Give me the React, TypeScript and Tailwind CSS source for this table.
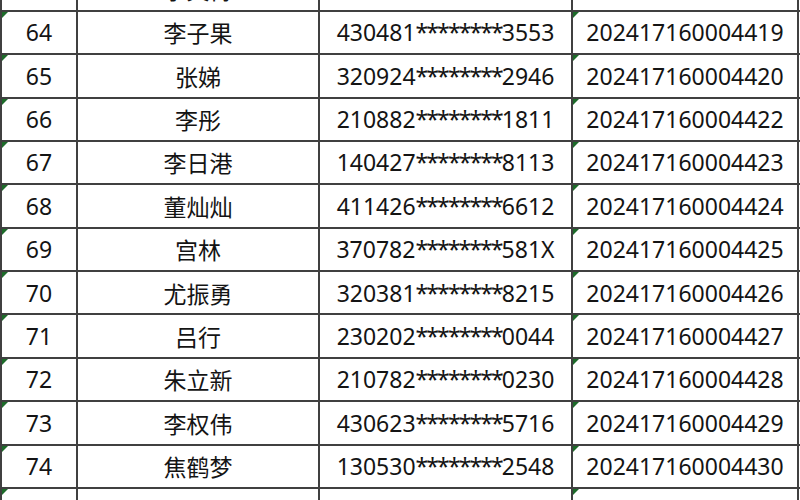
const rows = [
  { no: "63", name: "李文博", idCard: "410923********1237", examNo: "202417160004418" },
  { no: "64", name: "李子果", idCard: "430481********3553", examNo: "202417160004419" },
  { no: "65", name: "张娣", idCard: "320924********2946", examNo: "202417160004420" },
  { no: "66", name: "李彤", idCard: "210882********1811", examNo: "202417160004422" },
  { no: "67", name: "李日港", idCard: "140427********8113", examNo: "202417160004423" },
  { no: "68", name: "董灿灿", idCard: "411426********6612", examNo: "202417160004424" },
  { no: "69", name: "宫林", idCard: "370782********581X", examNo: "202417160004425" },
  { no: "70", name: "尤振勇", idCard: "320381********8215", examNo: "202417160004426" },
  { no: "71", name: "吕行", idCard: "230202********0044", examNo: "202417160004427" },
  { no: "72", name: "朱立新", idCard: "210782********0230", examNo: "202417160004428" },
  { no: "73", name: "李权伟", idCard: "430623********5716", examNo: "202417160004429" },
  { no: "74", name: "焦鹤梦", idCard: "130530********2548", examNo: "202417160004430" },
  { no: "75", name: "聂丽", idCard: "370983********0028", examNo: "202417160004431" },
];

// Excel's little "number stored as text" marker
function Marker() {
  return (
    <span className="absolute left-0 top-0 h-0 w-0 border-t-[6px] border-r-[6px] border-t-[#1d6b2a] border-r-transparent" />
  );
}

function Cell({
  children,
  className,
  marker,
}: {
  children: React.ReactNode;
  className: string;
  marker?: boolean;
}) {
  return (
    <div
      className={`relative flex items-center justify-center border-l-2 border-[#404040] ${className}`}
    >
      {marker && <Marker />}
      {children}
    </div>
  );
}

export default function App() {
  return (
    <div className="h-[500px] w-[800px] overflow-hidden bg-white text-[23px] text-[#141414] [font-family:'Noto_Sans','Noto_Sans_CJK_SC',sans-serif]">
      <div className="mt-[-31.4px]">
        {rows.map((r) => (
          <div
            key={r.no}
            className="flex h-[43.36px] border-b-2 border-[#404040]"
          >
            <Cell className="w-[76px]" marker>
              {r.no}
            </Cell>
            <Cell className="w-[242px] [font-family:'Noto_Sans_CJK_SC',sans-serif]">
              {r.name}
            </Cell>
            <Cell className="w-[253px]">
              <span>
                {r.idCard.slice(0, 6)}
                <span className="tracking-[-1.9px]">{r.idCard.slice(6, 14)}</span>
                {r.idCard.slice(14)}
              </span>
            </Cell>
            <Cell className="w-[228px] border-r-2" marker>
              {r.examNo}
            </Cell>
          </div>
        ))}
      </div>
    </div>
  );
}
